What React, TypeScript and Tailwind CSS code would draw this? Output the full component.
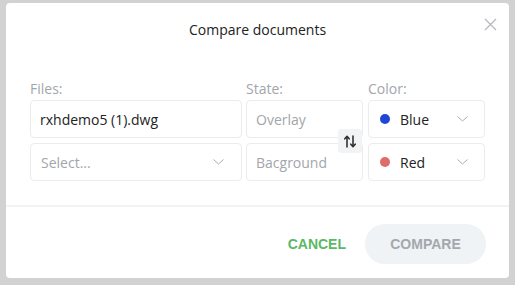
import React from "react";

const Chevron = () => (
  <svg width="11" height="6" viewBox="0 0 11 6" fill="none" className="shrink-0">
    <path d="M0.5 0.5 L5.5 5 L10.5 0.5" stroke="#a9adb1" strokeWidth="1" />
  </svg>
);

const SwapIcon = () => (
  <svg width="12" height="13" viewBox="0 0 12 13" fill="none">
    <path d="M3 12 V1.5 M0.8 3.8 L3 1.3 L5.2 3.8" stroke="#333" strokeWidth="1.6" strokeLinecap="round" strokeLinejoin="round" />
    <path d="M9 1 V11.5 M6.8 9.2 L9 11.7 L11.2 9.2" stroke="#333" strokeWidth="1.6" strokeLinecap="round" strokeLinejoin="round" />
  </svg>
);

const box = "h-[38px] border border-[#ececec] rounded-[4px] bg-white flex items-center";

export default function App() {
  return (
    <div
      className="w-[515px] h-[285px] pt-[3px] pl-[6px] bg-[#d2d2d2] overflow-hidden"
      style={{ fontFamily: '"Open Sans", sans-serif' }}
    >
      <div className="w-[503px] h-[275px] bg-white rounded-[4px] flex flex-col">
        <div className="relative h-[76px] pt-[17px] flex justify-center">
          <div className="text-[14px] leading-[20px] text-[#222]">Compare documents</div>
          <button className="absolute right-[12px] top-[14px] w-[14px] h-[14px] flex items-center justify-center">
            <svg width="13" height="13" viewBox="0 0 13 13" fill="none">
              <path d="M1 1 L12 12 M12 1 L1 12" stroke="#b4b8bc" strokeWidth="1.2" />
            </svg>
          </button>
        </div>
        <div className="px-[24px] grid grid-cols-[212px_117px_118px] gap-x-[4px]">
          <div className="flex flex-col">
            <div className="text-[14px] leading-[20px] text-[#a2a6aa] mb-[1px]">Files:</div>
            <div className={`${box} px-[9px] text-[14px] text-[#222]`}>rxhdemo5 (1).dwg</div>
            <div className={`${box} mt-[5px] pl-[10px] pr-[17px] justify-between text-[14px] text-[#a2a6aa]`}>
              <span>Select...</span>
              <Chevron />
            </div>
          </div>
          <div className="flex flex-col">
            <div className="text-[14px] leading-[20px] text-[#a2a6aa] mb-[1px]">State:</div>
            <div className="relative flex flex-col">
              <div className={`${box} px-[9px] text-[14px] text-[#a2a6aa]`}>Overlay</div>
              <div className={`${box} mt-[5px] px-[9px] text-[14px] text-[#a2a6aa]`}>Bacground</div>
              <div className="absolute right-[1px] top-[29px] w-[24px] h-[24px] bg-[#f2f3f4] rounded-[3px] flex items-center justify-center">
                <SwapIcon />
              </div>
            </div>
          </div>
          <div className="flex flex-col ml-[1px]">
            <div className="text-[14px] leading-[20px] text-[#a2a6aa] mb-[1px]">Color:</div>
            <div className={`${box} pl-[11px] pr-[16px] text-[14px] text-[#222]`}>
              <span className="w-[10px] h-[10px] rounded-full bg-[#1f46d6] mr-[10px]" />
              <span className="flex-1">Blue</span>
              <Chevron />
            </div>
            <div className={`${box} mt-[5px] pl-[11px] pr-[16px] text-[14px] text-[#222]`}>
              <span className="w-[10px] h-[10px] rounded-full bg-[#e06b6b] mr-[10px]" />
              <span className="flex-1">Red</span>
              <Chevron />
            </div>
          </div>
        </div>
        <div className="mt-[24px] h-[2px] bg-[#f2f3f4]" />
        <div className="flex justify-end items-center pt-[17px] pr-[23px] gap-[19px]" style={{ fontFamily: '"Liberation Sans", Arial, sans-serif' }}>
          <button className="text-[14px] font-bold text-[#5ab866]">CANCEL</button>
          <button className="w-[121px] h-[40px] rounded-full bg-[#eff3f6] text-[14px] font-bold text-[#a4a8ac]">COMPARE</button>
        </div>
      </div>
    </div>
  );
}
